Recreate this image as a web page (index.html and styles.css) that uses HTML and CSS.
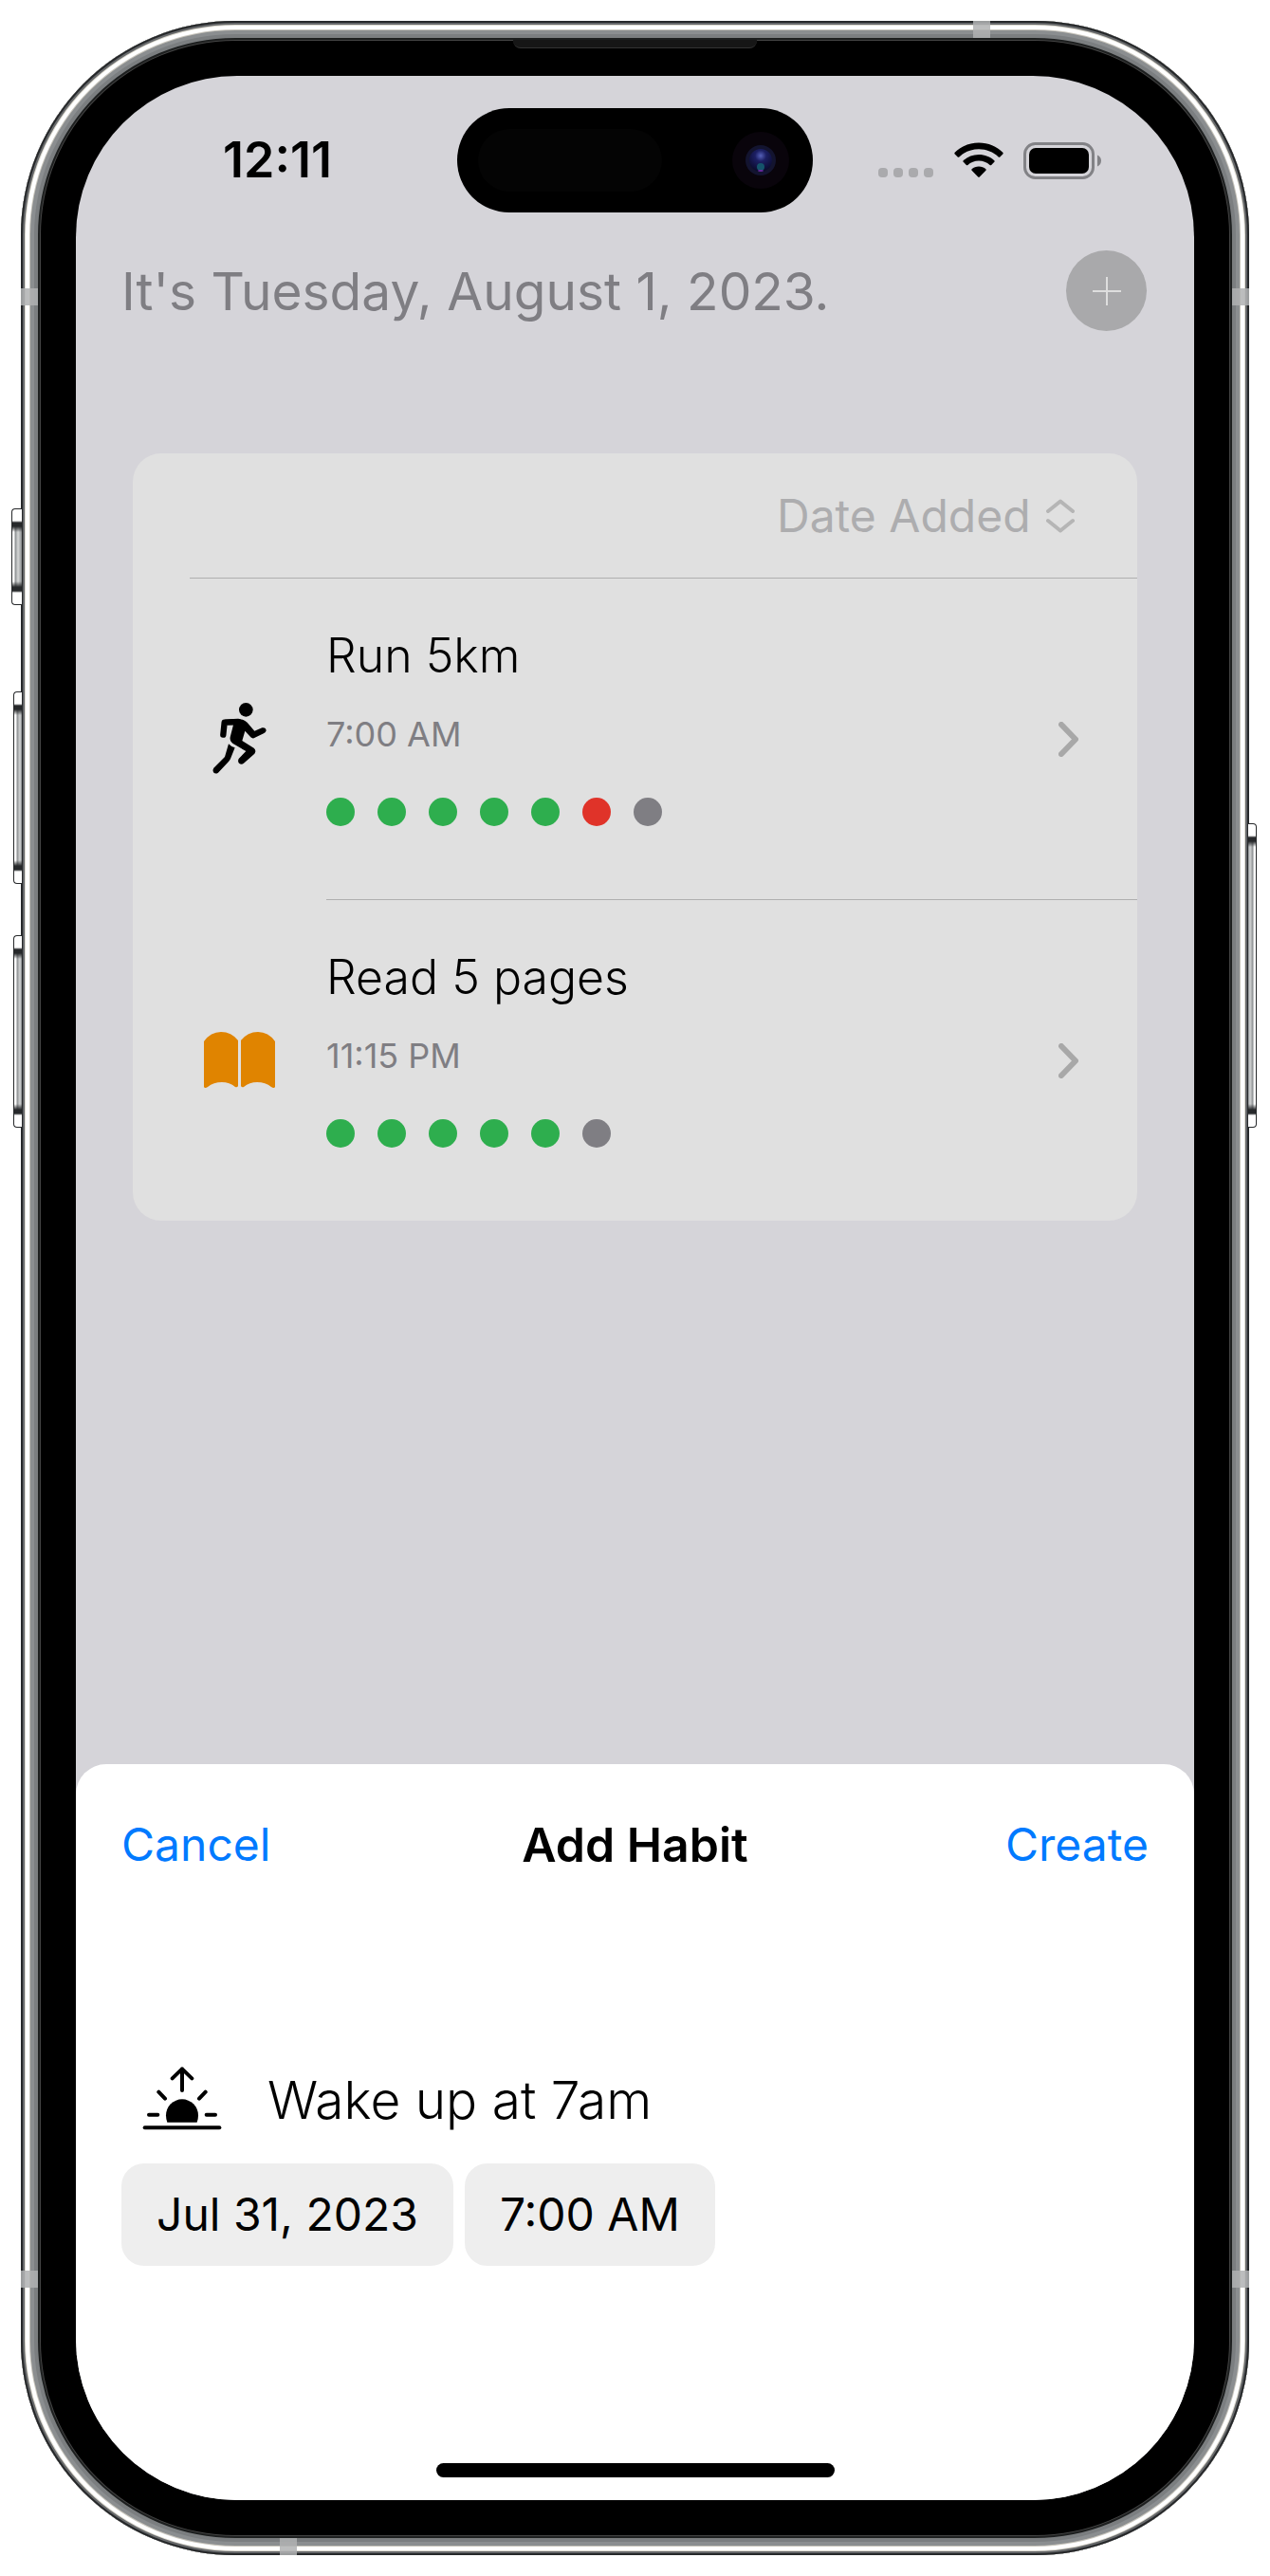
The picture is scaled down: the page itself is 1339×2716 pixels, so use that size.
FILE: index.html
```html
<!DOCTYPE html>
<html lang="en">
<head>
<meta charset="utf-8">
<meta name="viewport" content="width=device-width, initial-scale=1">
<title>Habits</title>
<link rel="stylesheet" href="styles.css">
</head>
<body>
<div class="phone">
  <span class="side-key side-key-action"></span>
  <span class="side-key side-key-up"></span>
  <span class="side-key side-key-down"></span>
  <span class="side-key side-key-power"></span>
  <span class="band band-left band-high"></span>
  <span class="band band-right band-high"></span>
  <span class="band band-left band-low"></span>
  <span class="band band-right band-low"></span>
  <span class="band band-top"></span>
  <span class="band band-bottom"></span>
  <span class="speaker"></span>

  <div class="screen">
    <div class="status">
      <time class="clock">12:11</time>
      <div class="island">
        <span class="sensor"></span>
        <svg class="camera" viewBox="0 0 60 60" aria-hidden="true">
          <defs>
            <radialGradient id="lens" cx="50%" cy="30%" r="70%">
              <stop offset="0" stop-color="#5560b8"/>
              <stop offset=".35" stop-color="#1c1f63"/>
              <stop offset="1" stop-color="#0a0a2a"/>
            </radialGradient>
          </defs>
          <circle cx="30" cy="30" r="30" fill="#09040b"/>
          <circle cx="30" cy="30" r="16" fill="#13142f"/>
          <circle cx="30" cy="30" r="12" fill="url(#lens)"/>
          <circle cx="30" cy="37" r="4" fill="#15546b"/>
          <ellipse cx="30" cy="41" rx="3" ry="1" fill="#6a2aa0"/>
        </svg>
      </div>
      <div class="signals">
        <svg width="60" height="38" viewBox="0 0 60 38" fill="#aaaaad" aria-hidden="true">
          <rect x="1" y="27" width="10" height="10" rx="4"/>
          <rect x="17" y="27" width="10" height="10" rx="4"/>
          <rect x="33" y="27" width="10" height="10" rx="4"/>
          <rect x="49" y="27" width="10" height="10" rx="4"/>
        </svg>
        <svg width="52" height="38" viewBox="0 0 52 38" aria-hidden="true">
          <path d="M26 .5C16 .5 7 4.500 .7 10.800q-.8.800 0 1.600l3 3q.8.800 1.600 0C10.800 10.200 18 7.200 26 7.200s15.200 3 20.700 8.200q.8.800 1.600 0l3-3q.8-.8 0-1.600C45 4.500 36 .5 26 .5z"/>
          <path d="M26 13C19.700 13 14 15.300 9.700 19.200q-.8.800 0 1.600l3.100 3.100q.8.700 1.600 0C17.500 21.200 21.500 19.600 26 19.600s8.500 1.600 11.600 4.300q.8.700 1.600 0l3.100-3.100q.8-.8 0-1.600C38 15.300 32.300 13 26 13z"/>
          <path d="M26 25.500c-2.800 0-5.400 1-7.400 2.700q-.8.800 0 1.600l6.600 6.700q.8.800 1.600 0l6.600-6.700q.8-.8 0-1.600c-2-1.700-4.600-2.700-7.400-2.700z"/>
        </svg>
        <svg width="82" height="39" viewBox="0 0 82 39" aria-hidden="true">
          <rect x="1.500" y="1.500" width="72" height="36" rx="11" fill="none" stroke="#828286" stroke-width="3"/>
          <rect x="6" y="6" width="63" height="27" rx="7"/>
          <path d="M78 13.500c2.400.8 4 3.200 4 6s-1.600 5.200-4 6z" fill="#828286"/>
        </svg>
      </div>
    </div>

    <header class="topbar">
      <h1 class="today">It's Tuesday, August 1, 2023.</h1>
      <button class="add" type="button" aria-label="Add habit">
        <svg width="30" height="30" viewBox="0 0 30 30" aria-hidden="true"><path d="M15 0v30M0 15h30" stroke="#dedede" stroke-width="2"/></svg>
      </button>
    </header>

    <main class="card">
      <div class="sort">
        <select class="sort-select" aria-label="Sort by">
          <option>Date Added</option>
          <option>Name</option>
        </select>
        <svg width="30" height="36" viewBox="0 0 30 36" fill="none" stroke="#b5b5b5" stroke-width="4" stroke-linecap="round" stroke-linejoin="round" aria-hidden="true"><path d="M2 13 15 2.500 28 13M2 23 15 33.500 28 23"/></svg>
      </div>
      <a class="habit" href="#run">
        <span class="habit-icon">
          <svg width="100" height="100" viewBox="-9 0 300 300" fill="none" stroke="#000" stroke-linecap="round" stroke-linejoin="round" aria-hidden="true">
            <circle cx="163" cy="58" r="22" fill="#000" stroke="none"/>
            <path d="M91 137 95 98 138 96" stroke-width="19"/>
            <path d="M96 89 138 87Q160 88 172 104L190 125 214 115Q226 113 227 124 226 130 219 133L188 148Q182 149 178 145L160 125 151 156 188 179Q197 187 190 197L156 227Q149 233 141 227 136 221 140 213L163 189 122 165Q111 158 113 145L123 106 96 106z" fill="#000" stroke="none"/>
            <path d="M108 166Q116 175 128 178L114 213Q112 218 108 222L75 257Q67 263 60 256 56 249 61 242L96 207z" fill="#000" stroke="none"/>
          </svg>
        </span>
        <span class="habit-body">
          <span class="habit-info">
            <span class="habit-name">Run 5km</span>
            <span class="habit-time">7:00 AM</span>
            <span class="dots">
              <i class="dot"></i><i class="dot"></i><i class="dot"></i><i class="dot"></i><i class="dot"></i><i class="dot missed"></i><i class="dot pending"></i>
            </span>
          </span>
          <svg class="chevron" width="21" height="37" viewBox="0 0 21 37" fill="none" stroke="#a8a8a8" stroke-width="6" stroke-linecap="round" stroke-linejoin="round" aria-hidden="true"><path d="M3 3 18 18.500 3 34"/></svg>
        </span>
      </a>
      <a class="habit" href="#read">
        <span class="habit-icon">
          <svg width="75" height="60" viewBox="0 0 75 60" fill="#e08400" aria-hidden="true">
            <path d="M0 10Q7 0 18 0T36 9V57Q35 59 33 58 27 53 19 53 10 53 4 58 1 60 0 58z"/>
            <path d="M39 9Q46 0 57 0T75 10V58Q74 60 71 58 65 53 56 53 48 53 42 58 40 59 39 57z"/>
          </svg>
        </span>
        <span class="habit-body">
          <span class="habit-info">
            <span class="habit-name">Read 5 pages</span>
            <span class="habit-time">11:15 PM</span>
            <span class="dots">
              <i class="dot"></i><i class="dot"></i><i class="dot"></i><i class="dot"></i><i class="dot"></i><i class="dot pending"></i>
            </span>
          </span>
          <svg class="chevron" width="21" height="37" viewBox="0 0 21 37" fill="none" stroke="#a8a8a8" stroke-width="6" stroke-linecap="round" stroke-linejoin="round" aria-hidden="true"><path d="M3 3 18 18.500 3 34"/></svg>
        </span>
      </a>
    </main>

    <form class="sheet">
      <div class="sheet-bar">
        <button class="sheet-action" type="button">Cancel</button>
        <h2 class="sheet-title">Add Habit</h2>
        <button class="sheet-action sheet-create" type="button">Create</button>
      </div>
      <div class="field">
        <svg width="84" height="70" viewBox="0 0 252 210" fill="none" stroke="#000" stroke-width="12" stroke-linecap="round" stroke-linejoin="round" aria-hidden="true">
          <path d="M126 75V7M95 37 126 7 157 37M52 80 72 101M200 80 180 101M21 152H49M203 152H231"/>
          <path d="M8 193H244"/>
          <path d="M79 176Q75 167 75 154A51 51 0 0 1 177 154Q177 167 173 176z" fill="#000" stroke="none"/>
        </svg>
        <input class="field-input" type="text" value="Wake up at 7am" aria-label="Habit name">
      </div>
      <div class="chips">
        <button class="chip" type="button">Jul 31, 2023</button>
        <button class="chip" type="button">7:00 AM</button>
      </div>
      <span class="home-bar"></span>
    </form>
  </div>
</div>
</body>
</html>
```

FILE: styles.css
```css
* { box-sizing: border-box; }

body {
  margin: 0;
  min-height: 100vh;
  padding: 22px;
  display: flex;
  background: #fff;
  color: #000;
  font-family: Inter, "Liberation Sans", sans-serif;
  font-size: 48px;
  line-height: 60px;
}

h1, h2 { margin: 0; font-weight: 400; }
button, input, select { font: inherit; color: inherit; border: 0; padding: 0; background: none; }
svg { display: block; flex: none; }

/* device shell */
.phone {
  position: relative;
  flex: 1;
  display: flex;
  padding: 58px;
  border-radius: 226px;
  background: #000;
  box-shadow:
    inset 0 0 0 2px #26282a,
    inset 0 0 0 4px #66686a,
    inset 0 0 0 5px #dcd9cf,
    inset 0 0 0 9px #fff,
    inset 0 0 0 10px #c9c6bd,
    inset 0 0 0 14px #8b8e90,
    inset 0 0 0 18px #7b7e80,
    inset 0 0 0 20px #1d1f1f,
    inset 0 0 0 21px #444;
}

.side-key {
  position: absolute;
  left: -8px;
  width: 9px;
  border: 1px solid #26282a;
  border-right: 0;
  border-radius: 4px 0 0 4px;
  background: linear-gradient(#fff 0 12px, #26282a 14px 18px, transparent 24px calc(100% - 24px), #26282a calc(100% - 18px) calc(100% - 14px), #fff calc(100% - 12px)), linear-gradient(90deg, #fff 2px, #8b8e90 3px, #d5d7d7 6px, #8b8e90);
}
.side-key-action { left: -10px; width: 11px; top: 514px; height: 102px; }
.side-key-up { top: 707px; height: 203px; }
.side-key-down { top: 964px; height: 203px; }
.side-key-power { left: auto; right: -8px; top: 846px; height: 321px; transform: scaleX(-1); }

.band { position: absolute; width: 18px; height: 18px; background: rgba(176, 177, 179, .85); }
.band-left { left: 0; }
.band-right { right: 0; }
.band-high { top: 282px; }
.band-low { bottom: 282px; }
.band-top { top: 0; right: 273px; }
.band-bottom { bottom: 0; left: 273px; }

.speaker {
  position: absolute;
  top: 20px;
  left: 50%;
  width: 257px;
  height: 9px;
  margin-left: -129px;
  border-radius: 0 0 8px 8px;
  border-bottom: 1px solid #333;
  background: #161616;
}

/* screen */
.screen {
  flex: 1;
  min-width: 0;
  display: flex;
  flex-direction: column;
  overflow: hidden;
  border-radius: 170px;
  background: #d5d4d9;
}

.status {
  display: grid;
  grid-template-columns: 1fr auto 1fr;
  align-items: center;
  padding-top: 34px;
}
.clock { padding-left: 155px; font-size: 52px; font-weight: 600; }
.island {
  display: flex;
  align-items: center;
  justify-content: space-between;
  width: 375px;
  height: 110px;
  padding: 0 25px 0 22px;
  border-radius: 55px;
  background: #000;
}
.sensor { width: 194px; height: 66px; border-radius: 33px; background: #040404; }
.camera { width: 60px; height: 60px; }
.signals {
  display: flex;
  justify-content: flex-end;
  gap: 21px;
  padding-right: 98px;
}

.topbar {
  display: flex;
  align-items: center;
  justify-content: space-between;
  padding: 40px 50px 0 48px;
}
.today { font-size: 55px; color: #7f7e83; line-height: 72px; }
.add {
  display: grid;
  place-items: center;
  width: 85px;
  height: 85px;
  border-radius: 50%;
  background: #a9a9ab;
}

.card {
  margin: 129px 60px 80px;
  padding-left: 60px;
  border-radius: 30px;
  background: #e0e0e0;
}
.sort {
  display: flex;
  align-items: center;
  justify-content: flex-end;
  gap: 16px;
  height: 132px;
  padding-right: 66px;
  border-bottom: 1px solid #afafaf;
  color: #adadaf;
}
.sort-select { appearance: none; }

.habit {
  display: flex;
  gap: 40px;
  color: inherit;
  text-decoration: none;
}
.habit-icon { display: grid; place-items: center; width: 104px; }
.habit-body {
  flex: 1;
  display: flex;
  align-items: center;
  justify-content: space-between;
  padding: 53px 62px 77px 0;
}
.habit-body .chevron { margin-top: 24px; }
.habit + .habit .habit-body { border-top: 1px solid #afafaf; }
.habit-info { display: flex; flex-direction: column; }
.habit-name { font-size: 50px; font-weight: 300; line-height: 56px; }
.habit-time { margin-top: 33px; font-size: 36px; line-height: 44px; color: #7f7e83; }
.dots { display: flex; gap: 24px; margin-top: 45px; }
.dot { width: 30px; height: 30px; border-radius: 50%; background: #2eae4e; }
.missed { background: #e03329; }
.pending { background: #7f7e83; }

/* add-habit sheet */
.sheet {
  display: flex;
  flex-direction: column;
  margin-top: auto;
  padding: 55px 48px 24px;
  border-radius: 32px 32px 0 0;
  background: #fff;
}
.sheet-bar {
  display: grid;
  grid-template-columns: 1fr auto 1fr;
  align-items: center;
}
.sheet-action { color: #007aff; justify-self: start; }
.sheet-create { justify-self: end; }
.sheet-title { font-size: 50px; font-weight: 600; }
.field {
  display: flex;
  align-items: center;
  gap: 48px;
  margin-top: 203px;
  padding-left: 22px;
}
.field-input {
  flex: 1;
  min-width: 0;
  height: 72px;
  font-size: 55px;
  font-weight: 300;
  outline: none;
}
.chips { display: flex; gap: 12px; margin-top: 31px; }
.chip {
  height: 108px;
  padding: 0 37px;
  border-radius: 24px;
  background: #eee;
}
.home-bar {
  align-self: center;
  width: 420px;
  height: 15px;
  margin-top: 208px;
  border-radius: 8px;
  background: #000;
}
```
